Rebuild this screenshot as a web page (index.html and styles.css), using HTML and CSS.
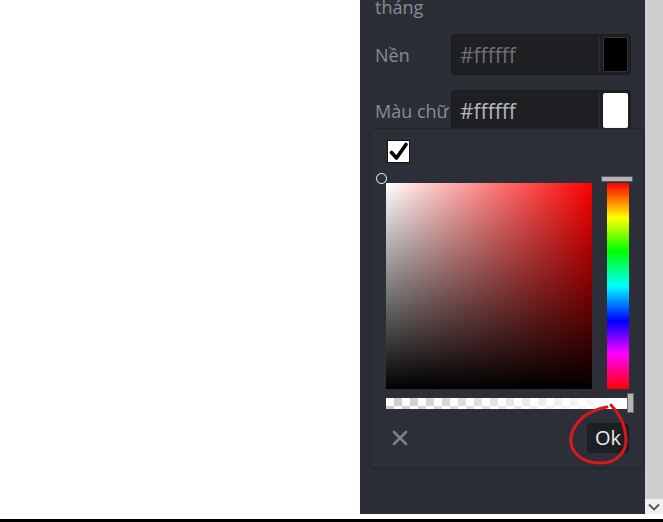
FILE: index.html
```html
<!DOCTYPE html>
<html lang="vi">
<head>
<meta charset="utf-8">
<title>Màu</title>
<link rel="stylesheet" href="styles.css">
</head>
<body>
<div class="screen">
  <div class="blank"></div>
  <div class="panel">
    <div class="content">
      <div class="month">tháng</div>
      <div class="row">
        <span class="label">Nền</span>
        <div class="field">
          <span class="val dim">#ffffff</span>
          <span class="sep"></span>
          <span class="swatch black"></span>
        </div>
      </div>
      <div class="row">
        <span class="label">Màu chữ</span>
        <div class="field">
          <span class="val">#ffffff</span>
          <span class="sep"></span>
          <span class="swatch white"></span>
        </div>
      </div>
    </div>
    <div class="picker">
      <div class="check">
        <svg width="21" height="21" viewBox="0 0 21 21"><path d="M3.5 11.5 L8.5 17 L18 3.5" fill="none" stroke="#000" stroke-width="3.6" stroke-linecap="round" stroke-linejoin="round"/></svg>
      </div>
      <div class="area">
        <div class="sv"><span class="sv-handle"></span></div>
        <div class="hue"><span class="hue-handle"></span></div>
      </div>
      <div class="alpha"><span class="alpha-handle"></span></div>
      <div class="actions">
        <svg class="close" width="16" height="16" viewBox="0 0 16 16"><path d="M2 2 L14 14 M14 2 L2 14" stroke="#7e8085" stroke-width="2.6" stroke-linecap="round"/></svg>
        <button class="ok">Ok</button>
      </div>
    </div>
  </div>
  <div class="scrollbar">
    <div class="thumb"></div>
    <div class="arrow">
      <svg width="12" height="8" viewBox="0 0 12 8"><path d="M1 1.5 L6 6.5 L11 1.5" fill="none" stroke="#505050" stroke-width="1.8"/></svg>
    </div>
  </div>
</div>
<div class="bottom-line"></div>
<svg class="annot" width="663" height="522" viewBox="0 0 663 522"><path d="M607 407 C 590 410, 574 420, 571 437 C 569 452, 582 463, 600 463 C 617 463, 627 452, 626 438 C 625 424, 619 413, 611 405" fill="none" stroke="#e0161b" stroke-width="3" stroke-linecap="round"/></svg>
</body>
</html>
```
FILE: styles.css
```css
html, body {
  margin: 0;
  padding: 0;
  background: #ffffff;
}
body {
  width: 663px;
  height: 522px;
  overflow: hidden;
  position: relative;
  font-family: "Open Sans", "Noto Sans", sans-serif;
}
.screen {
  display: flex;
  height: 514px;
}
.blank {
  width: 360px;
  background: #ffffff;
}
.panel {
  width: 285px;
  background: #2b2e36;
  position: relative;
  overflow: hidden;
}
.content {
  padding: 0 14px 0 15px;
  margin-top: -6px;
}
.month {
  font-size: 18px;
  line-height: 26px;
  color: #8a8c91;
}
.row {
  display: flex;
  align-items: center;
  margin-top: 14px;
}
.row + .row {
  margin-top: 15px;
}
.label {
  width: 76px;
  font-size: 18px;
  color: #8a8c91;
  white-space: nowrap;
  overflow: visible;
}
.field {
  width: 180px;
  height: 41px;
  box-sizing: border-box;
  background: #1e1f23;
  border: 1px solid #1b1c1f;
  border-radius: 4px;
  display: flex;
  align-items: center;
}
.val {
  flex: 1;
  padding-left: 8px;
  font-size: 21px;
  color: #b4b6b9;
}
.val.dim {
  color: #6d6f73;
}
.sep {
  width: 1px;
  align-self: stretch;
  background: #2b2d32;
}
.swatch {
  width: 25px;
  height: 35px;
  margin: 0 2px 0 3px;
  border-radius: 2px;
  box-sizing: border-box;
}
.swatch.black {
  background: #000000;
  border: 1px solid #33353a;
}
.swatch.white {
  background: #ffffff;
}
.picker {
  position: absolute;
  left: 10px;
  top: 128px;
  width: 274px;
  height: 340px;
  box-sizing: border-box;
  background: #2c2f37;
  border: 1px solid #25272d;
  border-radius: 5px;
  box-shadow: 0 1px 3px rgba(0,0,0,0.25);
  padding: 11px 0 0 15px;
}
.check {
  width: 23px;
  height: 23px;
  box-sizing: border-box;
  background: #ffffff;
  border: 1px solid #111;
  margin-left: 1px;
  display: flex;
  align-items: center;
  justify-content: center;
}
.area {
  display: flex;
  gap: 15px;
  margin-top: 20px;
}
.sv {
  width: 206px;
  height: 206px;
  position: relative;
  background:
    linear-gradient(to top, #000000, rgba(0,0,0,0)),
    linear-gradient(to right, #ffffff, #ff0000);
}
.sv-handle {
  position: absolute;
  left: -10px;
  top: -10px;
  width: 9px;
  height: 9px;
  border: 1.5px solid #ffffff;
  border-radius: 50%;
}
.hue {
  width: 22px;
  height: 206px;
  position: relative;
  background: linear-gradient(to bottom, #ff0000 0%, #ffff00 17%, #00ff00 33%, #00ffff 50%, #0000ff 67%, #ff00ff 83%, #ff0000 100%);
}
.hue-handle {
  position: absolute;
  left: -6px;
  top: -7px;
  width: 32px;
  height: 6px;
  box-sizing: border-box;
  background: #b3b3b3;
  border: 1px solid #55575c;
}
.alpha {
  width: 241px;
  height: 11px;
  margin-top: 9px;
  position: relative;
  background:
    linear-gradient(to right, rgba(255,255,255,0), #ffffff),
    repeating-conic-gradient(#cccccc 0 25%, #ffffff 0 50%) 0 0 / 16px 16px;
}
.alpha-handle {
  position: absolute;
  right: -7px;
  top: -5px;
  width: 7px;
  height: 20px;
  box-sizing: border-box;
  background: #b5b5b5;
  border: 1px solid #66686c;
}
.actions {
  display: flex;
  align-items: center;
  justify-content: space-between;
  width: 243px;
  margin-top: 14px;
  padding-left: 6px;
  box-sizing: border-box;
}
.close {
  display: block;
}
.ok {
  width: 42px;
  height: 30px;
  border: 1px solid #1b1c20;
  border-radius: 4px;
  background: #1e1f24;
  color: #ececec;
  font-family: "Open Sans", "Noto Sans", sans-serif;
  font-size: 20px;
  padding: 0;
  line-height: 28px;
}
.scrollbar {
  width: 18px;
  display: flex;
  flex-direction: column;
  background: #f1f1f1;
}
.thumb {
  flex: 1;
  background: #cfcfcf;
}
.arrow {
  height: 15px;
  display: flex;
  align-items: center;
  justify-content: center;
  background: #f1f1f1;
}
.bottom-line {
  position: absolute;
  left: 0;
  bottom: 0;
  width: 663px;
  height: 3px;
  background: #000000;
}
.annot {
  position: absolute;
  left: 0;
  top: 0;
  pointer-events: none;
}
```
